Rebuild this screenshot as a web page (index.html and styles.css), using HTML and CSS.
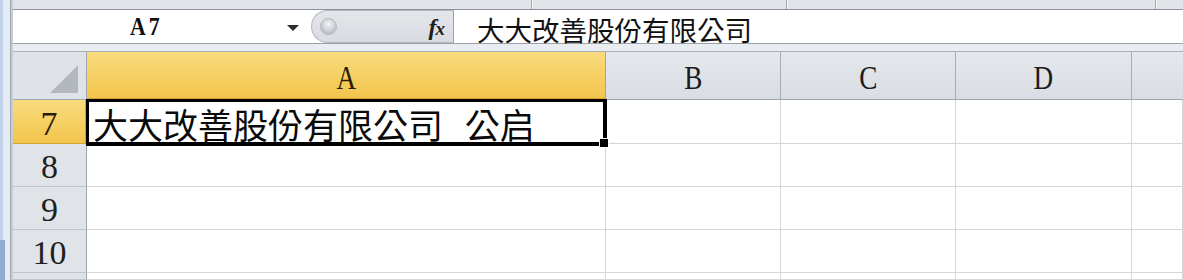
FILE: index.html
```html
<!DOCTYPE html>
<html lang="zh-Hant">
<head>
<meta charset="utf-8">
<title>Excel</title>
<link rel="stylesheet" href="styles.css">
</head>
<body>
<div class="app">
  <div class="frame"><div class="frame-mark"></div></div>
  <div class="main">
    <div class="strip">
      <div class="seg s1"></div>
      <div class="seg s2"></div>
      <div class="seg s3"></div>
      <div class="seg s4"></div>
    </div>
    <div class="fbar">
      <div class="namebox">
        <span class="ref">A7</span>
        <span class="caret"></span>
      </div>
      <div class="pill">
        <span class="knob"></span>
        <span class="fx">f<span class="fx-x">x</span></span>
      </div>
      <div class="finput">大大改善股份有限公司</div>
    </div>
    <div class="band"></div>
    <div class="sheet">
      <div class="corner"><span class="tri"></span></div>
      <div class="colh colh-sel"><span class="lt">A</span></div>
      <div class="colh"><span class="lt">B</span></div>
      <div class="colh"><span class="lt">C</span></div>
      <div class="colh"><span class="lt">D</span></div>
      <div class="colh colh-last"></div>

      <div class="rowh rowh-sel">7</div>
      <div class="cell cell-active"><span class="val">大大改善股份有限公司 公启</span><span class="sel"></span><span class="handle"></span></div>
      <div class="cell"></div>
      <div class="cell"></div>
      <div class="cell"></div>
      <div class="cell"></div>

      <div class="rowh">8</div>
      <div class="cell"></div>
      <div class="cell"></div>
      <div class="cell"></div>
      <div class="cell"></div>
      <div class="cell"></div>

      <div class="rowh">9</div>
      <div class="cell"></div>
      <div class="cell"></div>
      <div class="cell"></div>
      <div class="cell"></div>
      <div class="cell"></div>

      <div class="rowh">10</div>
      <div class="cell"></div>
      <div class="cell"></div>
      <div class="cell"></div>
      <div class="cell"></div>
      <div class="cell"></div>

      <div class="rowh"></div>
      <div class="cell"></div>
      <div class="cell"></div>
      <div class="cell"></div>
      <div class="cell"></div>
      <div class="cell"></div>
    </div>
  </div>
</div>
</body>
</html>
```

FILE: styles.css
```css
* { box-sizing: border-box; }

html, body {
  margin: 0;
  padding: 0;
  background: #ffffff;
}

body {
  width: 1183px;
  height: 280px;
  overflow: hidden;
  font-family: "Liberation Serif", serif;
}

.app {
  display: flex;
  width: 1183px;
  height: 280px;
}

/* left window frame */
.frame {
  width: 13px;
  flex: none;
  display: flex;
  flex-direction: column;
  justify-content: flex-end;
  background: linear-gradient(to right, #bfd1e9 0, #bfd1e9 3px, #e4ebf5 3px, #e4ebf5 10px, #9ea6b0 10px, #9ea6b0 11px, #c7ccd3 11px, #c7ccd3 13px);
}

.frame-mark {
  width: 5px;
  height: 40px;
  background: #92acd0;
}

.main {
  flex: 1;
  display: flex;
  flex-direction: column;
  min-width: 0;
}

/* top ribbon remnant */
.strip {
  height: 10px;
  display: flex;
  background: #e1e4e9;
  border-bottom: 1px solid #8b919a;
}

.seg {
  border-right: 1px solid #a3a9b1;
  box-shadow: 1px 0 0 #f6f7f9;
}
.s1 { width: 519px; }
.s2 { width: 255px; }
.s3 { width: 369px; }
.s4 { flex: 1; border-right: none; box-shadow: none; }

/* formula bar */
.fbar {
  height: 34px;
  display: flex;
  background: #ffffff;
  border-bottom: 1px solid #9ba1a9;
}

.namebox {
  width: 298px;
  display: flex;
  align-items: center;
  padding-left: 117px;
  padding-right: 12px;
}

.ref {
  font-family: "Liberation Serif", serif;
  font-weight: bold;
  font-size: 23px;
  color: #111;
  display: inline-block;
  transform: scale(0.95, 1.05);
  transform-origin: left center;
  letter-spacing: 3px;
  padding-top: 3px;
}

.caret {
  margin-left: auto;
  width: 0;
  height: 0;
  border-left: 6px solid transparent;
  border-right: 6px solid transparent;
  border-top: 6px solid #2b2b2b;
  margin-top: 3px;
}

.pill {
  width: 143px;
  display: flex;
  align-items: center;
  background: linear-gradient(to bottom, #e4e6ea, #d8dbe0);
  border: 1px solid #b2b7be;
  border-right: 1px solid #9aa0a8;
  border-radius: 17px 0 0 17px;
  padding-left: 8px;
  padding-right: 9px;
}

.knob {
  width: 17px;
  height: 17px;
  border-radius: 50%;
  background: radial-gradient(circle at 50% 35%, #f4f5f7 0, #c9cdd3 55%, #a7acb4 100%);
  border: 1px solid #b2b7be;
}

.fx {
  margin-left: auto;
  font-family: "Liberation Serif", serif;
  font-style: italic;
  font-weight: bold;
  font-size: 24px;
  color: #1e1e1e;
  letter-spacing: -1px;
  padding-top: 2px;
}

.fx-x {
  font-size: 19px;
  vertical-align: baseline;
}

.finput {
  flex: 1;
  display: flex;
  align-items: center;
  padding-left: 23px;
  padding-top: 6px;
  font-family: "Noto Sans CJK TC", "Noto Sans CJK SC", sans-serif;
  font-size: 27.5px;
  color: #111;
  line-height: 1;
}

.band {
  height: 8px;
  background: #e9ecf0;
  border-bottom: 1px solid #aab0b8;
}

/* grid */
.sheet {
  flex: 1;
  display: grid;
  grid-template-columns: 74px 519px 175px 175px 176px 1fr;
  grid-template-rows: 48px 44px 43px 43px 43px 1fr;
}

.corner {
  position: relative;
  background: #dfe3e8;
  border-right: 1px solid #a1a7af;
  border-bottom: 1px solid #a1a7af;
}

.tri {
  position: absolute;
  right: 8px;
  bottom: 6px;
  width: 0;
  height: 0;
  border-left: 28px solid transparent;
  border-bottom: 28px solid #b3b8be;
}

.colh {
  display: flex;
  align-items: center;
  justify-content: center;
  padding-top: 5px;
  background: linear-gradient(to bottom, #e4e7eb, #dadee4);
  border-right: 1px solid #a7adb5;
  border-bottom: 1px solid #9fa5ad;
  color: #1c1c1c;
}

.colh-last {
  border-right: none;
}

.colh-sel {
  background: linear-gradient(to bottom, #f9dc7d, #f2c54c);
  border-right: 1px solid #c9a446;
  border-bottom: 2px solid #e09f36;
  color: #2a1d05;
}

.lt {
  display: inline-block;
  font-size: 34px;
  line-height: 1;
  transform: scaleX(0.8);
}

.rowh {
  display: flex;
  align-items: center;
  justify-content: center;
  padding-top: 4px;
  font-size: 34px;
  line-height: 1;
  color: #1f1f1f;
  background: #e0e4e9;
  border-right: 1px solid #9fa5ad;
  border-bottom: 1px solid #bfc4cb;
}

.rowh-sel {
  background: linear-gradient(to bottom, #f9dc7d, #f2c54c);
  border-right: 2px solid #e09f36;
  border-bottom: 1px solid #d5a43d;
  color: #2a1d05;
}

.cell {
  background: #ffffff;
  border-right: 1px solid #d6d6d6;
  border-bottom: 1px solid #d6d6d6;
}

.cell-active {
  position: relative;
  display: flex;
  align-items: flex-end;
  padding-left: 6px;
}

.val {
  font-family: "Noto Sans CJK TC", "Noto Sans CJK SC", sans-serif;
  font-size: 35px;
  line-height: 1;
  color: #0a0a0a;
  white-space: pre;
  word-spacing: 14px;
  margin-bottom: 2px;
}

.sel {
  position: absolute;
  left: -1px;
  top: -1px;
  right: -2px;
  bottom: -3px;
  border-style: solid;
  border-color: #000;
  border-width: 3px 4px 4px 3px;
}

.handle {
  position: absolute;
  right: -4px;
  bottom: -5px;
  width: 10px;
  height: 10px;
  background: #000;
  border: 1px solid #fff;
}
```
